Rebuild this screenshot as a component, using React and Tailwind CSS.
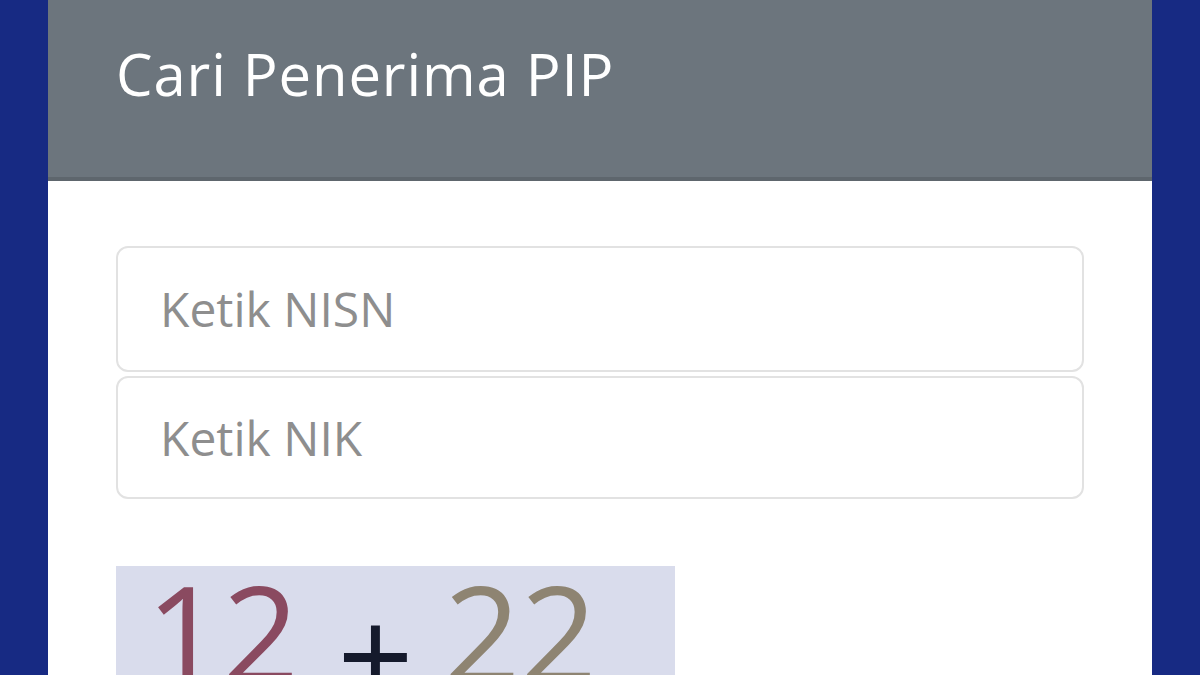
export default function App() {
  return (
    <div className="w-[1200px] h-[675px] overflow-hidden bg-[#172a83] flex justify-center" style={{ fontFamily: '"Open Sans", sans-serif' }}>
      <div className="w-[1104px] h-full bg-white flex flex-col">
        <div className="h-[181px] shrink-0 bg-[#6c757d] border-b-[4px] border-[#5e666d] flex items-start pl-[68px] pt-[35px]">
          <h1 className="text-white text-[58px] leading-[78px] tracking-[0.9px]">Cari Penerima PIP</h1>
        </div>
        <div className="px-[68px] pt-[65px] flex flex-col">
          <div className="h-[126px] border-2 border-[#e2e2e2] rounded-[12px] flex items-center pl-[42px] text-[48px] text-[#8e8e8e]">Ketik NISN</div>
          <div className="h-[123px] mt-[4px] border-2 border-[#e2e2e2] rounded-[12px] flex items-center pl-[42px] text-[48px] text-[#8e8e8e]">Ketik NIK</div>
          <div className="mt-[67px] w-[559px] h-[200px] bg-[#d9dcec] flex items-start pl-[30px] text-[134px] leading-[130px]">
            <span className="text-[#8a4a60]">12</span>
            <span className="text-[#151a2c] ml-[38px] mt-[22px]">+</span>
            <span className="text-[#8e8472] ml-[30px]">22</span>
          </div>
        </div>
      </div>
    </div>
  );
}
